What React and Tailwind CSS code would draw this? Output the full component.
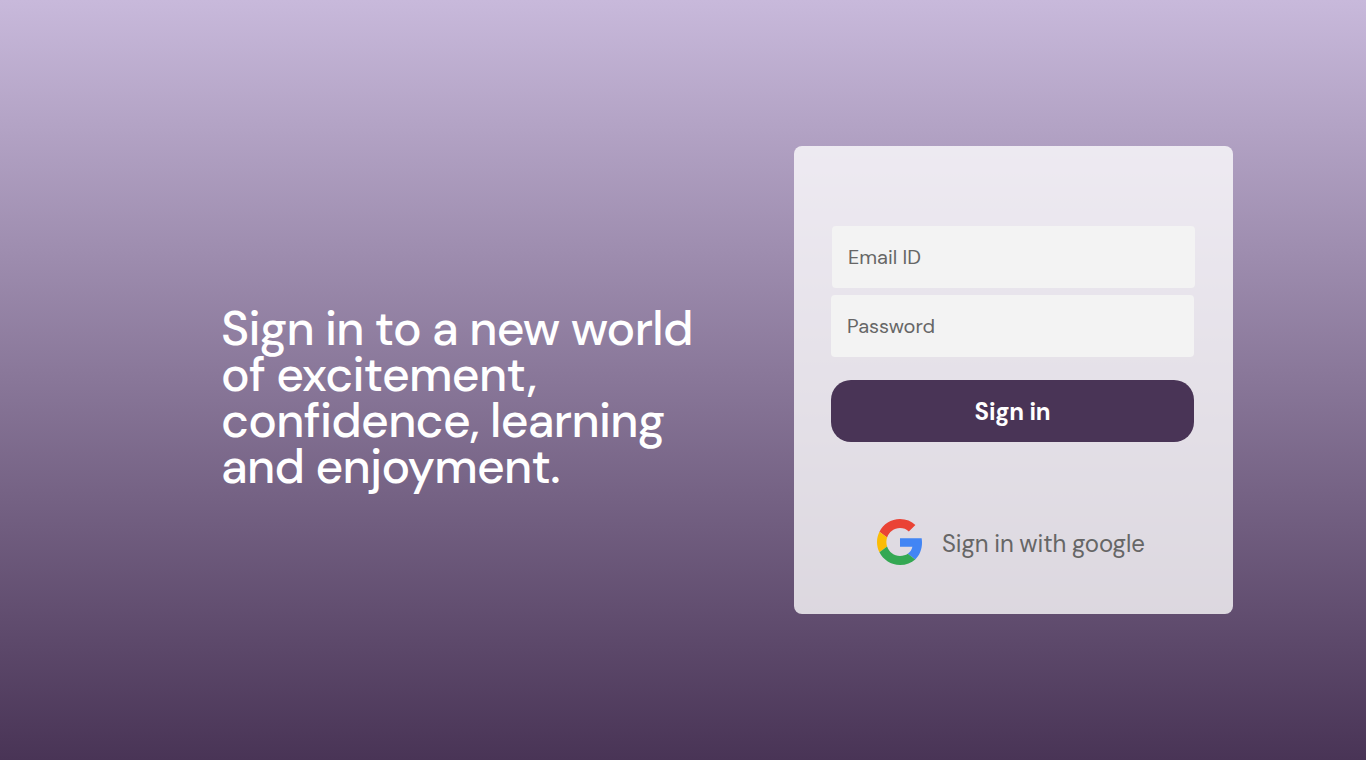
const SANS = "font-['DM_Sans','Open_Sans',sans-serif]";

function GoogleLogo() {
  return (
    <svg className="h-[46px] w-[46px] shrink-0" viewBox="0 0 48 48" aria-hidden="true">
      <path fill="#EA4335" d="M24 9.5c3.54 0 6.71 1.22 9.21 3.6l6.85-6.85C35.9 2.38 30.47 0 24 0 14.62 0 6.51 5.38 2.56 13.22l7.98 6.19C12.43 13.72 17.74 9.5 24 9.5z" />
      <path fill="#4285F4" d="M46.98 24.55c0-1.57-.15-3.09-.38-4.55H24v9.02h12.94c-.58 2.96-2.26 5.48-4.78 7.18l7.73 6c4.51-4.18 7.09-10.36 7.09-17.65z" />
      <path fill="#FBBC05" d="M10.53 28.59c-.48-1.45-.76-2.99-.76-4.59s.27-3.14.76-4.59l-7.98-6.19C.92 16.46 0 20.12 0 24c0 3.88.92 7.54 2.56 10.78l7.97-6.19z" />
      <path fill="#34A853" d="M24 48c6.48 0 11.93-2.13 15.89-5.81l-7.73-6c-2.15 1.45-4.92 2.3-8.16 2.3-6.26 0-11.57-4.22-13.47-9.91l-7.98 6.19C6.51 42.62 14.62 48 24 48z" />
    </svg>
  );
}

export default function App() {
  return (
    <main className={`flex h-[760px] w-full overflow-hidden bg-[linear-gradient(180deg,#c8b9db_0%,#493456_100%)] [font-optical-sizing:none] ${SANS}`}>
      <h1 className="ml-[221px] mt-[306px] w-[573px] shrink-0 whitespace-pre-line text-[48px] font-medium leading-[46px] tracking-[-0.7px] text-white [word-spacing:-0.5px]">
        {"Sign in to a new world\nof excitement,\nconfidence, learning\nand enjoyment."}
      </h1>
      <form className="mt-[146px] flex h-[468px] w-[439px] shrink-0 flex-col rounded-lg bg-white/78 pl-[37px] pt-[80px]" onSubmit={(e) => e.preventDefault()}>
        <input type="email" placeholder="Email ID" className="ml-px h-[62px] w-[363px] rounded-[4px] bg-[#f3f3f3] px-4 text-[20px] outline-none placeholder:text-[#666666]" />
        <input type="password" placeholder="Password" className="mt-[7px] h-[62px] w-[363px] rounded-[4px] bg-[#f3f3f3] px-4 text-[20px] outline-none placeholder:text-[#666666]" />
        <button type="submit" className="mt-[23px] h-[62px] w-[363px] rounded-[20px] bg-[#493456] pt-[2px] text-[24px] font-bold tracking-[-0.2px] text-white">Sign in</button>
        <button type="button" className="ml-[46px] mt-[77px] flex h-[46px] items-center text-[24px] whitespace-nowrap text-[#666666]">
          <GoogleLogo />
          <span className="ml-[19px] mt-[3px] tracking-[-0.1px] [word-spacing:-0.5px]">Sign in with google</span>
        </button>
      </form>
    </main>
  );
}
